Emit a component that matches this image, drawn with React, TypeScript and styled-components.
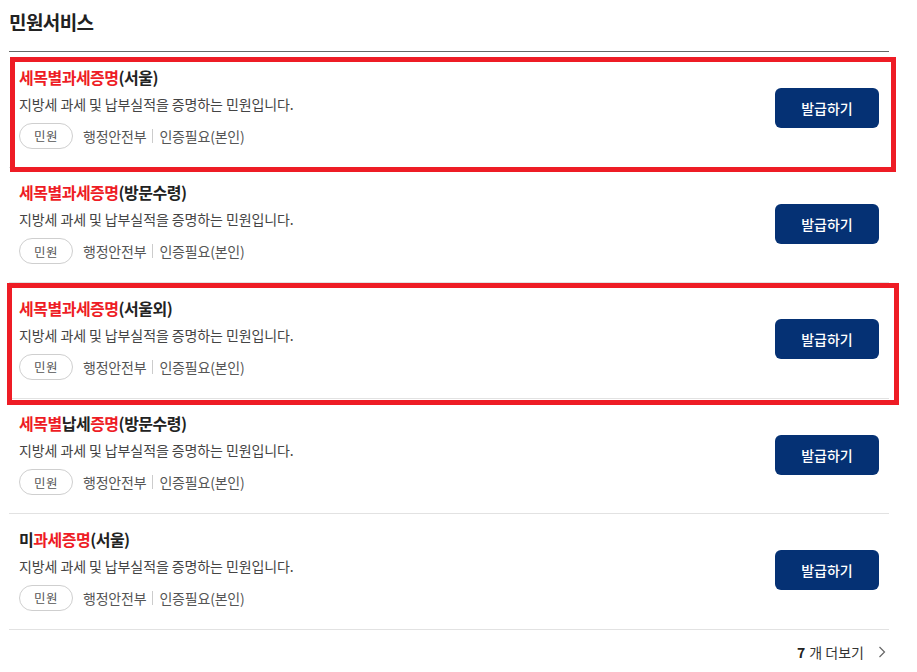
import styled, { createGlobalStyle } from "styled-components";

const GlobalStyle = createGlobalStyle`
  body {
    margin: 0;
    background: #fff;
    font-family: "Noto Sans CJK KR", "Noto Sans", sans-serif;
    color: #222;
  }
`;

type Part = { text: string; red?: boolean };

type Service = {
  title: Part[];
  highlight?: { top: number; right: number; bottom: number; left: number };
};

const services: Service[] = [
  {
    title: [{ text: "세목별과세증명", red: true }, { text: "(서울)" }],
    highlight: { top: 5, right: -7, bottom: -5, left: 1 },
  },
  {
    title: [{ text: "세목별과세증명", red: true }, { text: "(방문수령)" }],
  },
  {
    title: [{ text: "세목별과세증명", red: true }, { text: "(서울외)" }],
    highlight: { top: 0, right: -10, bottom: -7, left: -2 },
  },
  {
    title: [
      { text: "세목별", red: true },
      { text: "납세" },
      { text: "증명", red: true },
      { text: "(방문수령)" },
    ],
  },
  {
    title: [{ text: "미" }, { text: "과세증명", red: true }, { text: "(서울)" }],
  },
];

function App() {
  return (
    <>
      <GlobalStyle />
      <Wrapper>
        <Heading>민원서비스</Heading>
        <List>
          {services.map((s, i) => (
            <Row key={i}>
              {s.highlight && <Highlight {...s.highlight} />}
              <Info>
                <Title>
                  {s.title.map((p, j) => (
                    <TitlePart key={j} $red={p.red}>
                      {p.text}
                    </TitlePart>
                  ))}
                </Title>
                <Desc>지방세 과세 및 납부실적을 증명하는 민원입니다.</Desc>
                <Meta>
                  <Pill>민원</Pill>
                  <MetaText>행정안전부</MetaText>
                  <Divider />
                  <MetaText>인증필요(본인)</MetaText>
                </Meta>
              </Info>
              <IssueButton>발급하기</IssueButton>
            </Row>
          ))}
        </List>
        <Footer>
          <MoreLink>
            <Count>7</Count> 개 더보기
            <svg width="8" height="12" viewBox="0 0 8 12" fill="none">
              <path d="M1.5 1l5 5-5 5" stroke="#666" strokeWidth="1.2" />
            </svg>
          </MoreLink>
        </Footer>
      </Wrapper>
    </>
  );
}

export default App;

const Wrapper = styled.div`
  width: 880px;
  margin-left: 9px;
`;

const Heading = styled.h2`
  margin: 0;
  padding-top: 7px;
  height: 44px;
  font-size: 19px;
  line-height: 30px;
  font-weight: 700;
  letter-spacing: -0.6px;
  color: #222;
  border-bottom: 1px solid #666;
`;

const List = styled.ul`
  margin: 0;
  padding: 0;
  list-style: none;
`;

const Row = styled.li`
  position: relative;
  box-sizing: border-box;
  height: 115.5px;
  padding: 0 10px;
  display: flex;
  align-items: center;
  justify-content: space-between;
  border-bottom: 1px solid #e2e2e2;
`;

const Highlight = styled.div<{ top: number; right: number; bottom: number; left: number }>`
  position: absolute;
  top: ${({ top }) => top}px;
  right: ${({ right }) => right}px;
  bottom: ${({ bottom }) => bottom}px;
  left: ${({ left }) => left}px;
  border: 5px solid #ee1c25;
  pointer-events: none;
`;

const Info = styled.div`
  display: flex;
  flex-direction: column;
  padding-bottom: 5px;
`;

const Title = styled.div`
  font-size: 16px;
  font-weight: 700;
  line-height: 24px;
  letter-spacing: -0.5px;
`;

const TitlePart = styled.span<{ $red?: boolean }>`
  color: ${({ $red }) => ($red ? "#ee1c25" : "#222")};
`;

const Desc = styled.p`
  margin: 4px 0 0;
  font-size: 14px;
  line-height: 22px;
  color: #444;
  letter-spacing: -0.1px;
`;

const Meta = styled.div`
  margin-top: 8px;
  display: flex;
  align-items: center;
`;

const Pill = styled.span`
  box-sizing: border-box;
  width: 54px;
  height: 26px;
  border: 1px solid #cfcfcf;
  border-radius: 13px;
  display: flex;
  align-items: center;
  justify-content: center;
  font-size: 12.5px;
  letter-spacing: 0.5px;
  color: #555;
  margin-right: 10px;
`;

const MetaText = styled.span`
  font-size: 14px;
  color: #555;
  letter-spacing: -0.2px;
`;

const Divider = styled.span`
  width: 1px;
  height: 14px;
  background: #ccc;
  margin: 0 6px;
`;

const IssueButton = styled.button`
  width: 104px;
  height: 40px;
  border: none;
  border-radius: 6px;
  background: #053174;
  color: #fff;
  font-family: inherit;
  font-size: 14px;
  font-weight: 500;
  cursor: pointer;
  margin-top: -2px;
`;

const Footer = styled.div`
  display: flex;
  justify-content: flex-end;
  padding-top: 12px;
`;

const MoreLink = styled.a`
  display: flex;
  align-items: center;
  gap: 4px;
  font-size: 14px;
  color: #333;
  margin-right: 3px;

  svg {
    margin-left: 10px;
  }
`;

const Count = styled.strong`
  font-weight: 700;
  color: #222;
`;
